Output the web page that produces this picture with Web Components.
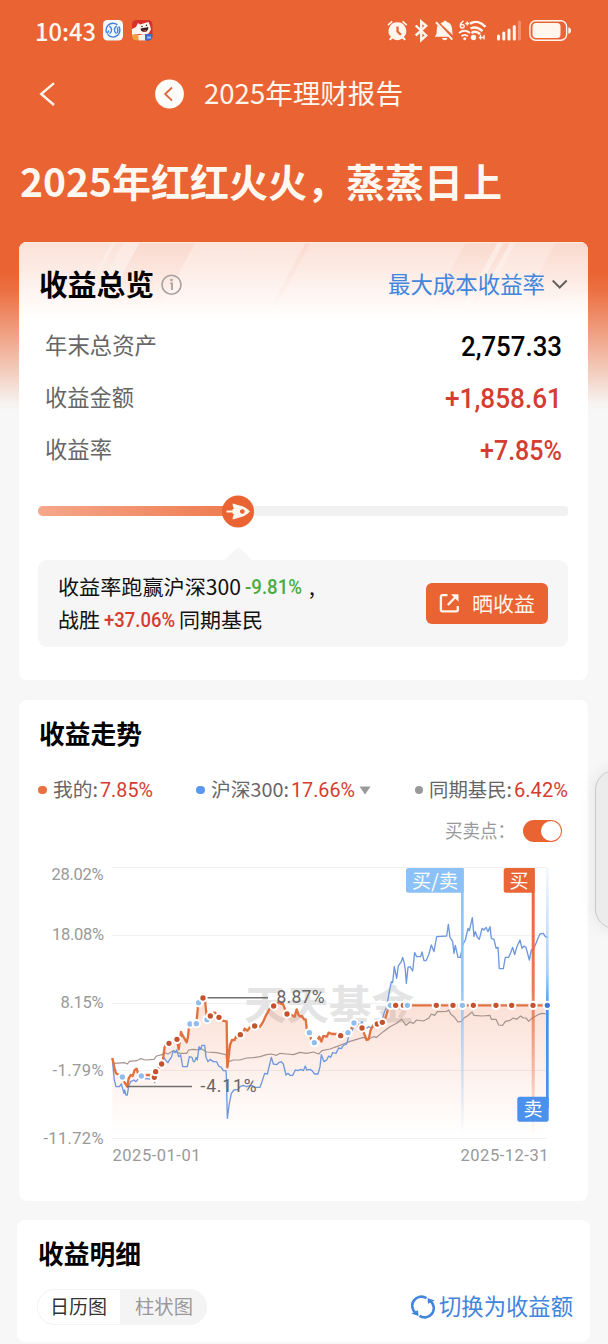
<!DOCTYPE html>
<html lang="zh-CN">
<head>
<meta charset="utf-8">
<title>2025年理财报告</title>
<style>
  html, body { margin: 0; padding: 0; }
  body { width: 608px; height: 1344px; overflow: hidden; background: #f7f7f7; font-family: "Noto Sans CJK SC", sans-serif; }
</style>
</head>
<body>
<report-page></report-page>
<script>
const make = (name, html, init) => {
  const tpl = document.createElement('template');
  tpl.innerHTML = html;
  customElements.define(name, class extends HTMLElement {
    connectedCallback() {
      if (this.shadowRoot) return;
      this.attachShadow({ mode: 'open' }).append(tpl.content.cloneNode(true));
      if (init) init(this, this.shadowRoot);
    }
  });
};

make('report-page', `
<style>
  :host { display: block; position: relative; height: 1344px; overflow: hidden;
    background: linear-gradient(#ea6333 0, #ea6333 272px, #ec7145 292px, #f0a285 335px, #f3cbbb 370px, #f7f3f2 404px, #f7f7f7 412px); }
</style>
<status-bar></status-bar>
<nav-bar></nav-bar>
<hero-title><fit-text w="482">2025年红红火火，蒸蒸日上</fit-text></hero-title>
<overview-card></overview-card>
<trend-card></trend-card>
<detail-card></detail-card>
<side-handle></side-handle>
`);

make('status-bar', `
<style>
  :host { display: flex; height: 61px; align-items: center; padding: 0 36px 0 35px; box-sizing: border-box; color: #fff6ee; }
  fit-text { font-size: 24px; font-weight: 500; line-height: 30px; }
  svg { display: block; flex: none; }
  .app { margin-left: 7px; } .app2 { margin-left: 9px; }
  .sp { flex: 1; }
</style>
<fit-text w="61">10:43</fit-text>
<svg class="app" width="20" height="21" viewBox="0 0 20 21"><rect width="20" height="20.5" rx="4.5" fill="#f6f8fd"/><g fill="none" stroke="#3d82dd" stroke-width="1.400"><circle cx="10" cy="10.200" r="6.900" stroke-dasharray="17 2 18 2 4.300 0"/><path d="M6.300 6.200c3 1.500 3 5.500.2 7.600M5.800 10.500c-.6 1.500-1 2.300-2 3M13.700 6.200c-3 1.500-3 5.500-.2 7.600M14.200 7.500c.8 1.500 1 3.500.2 5.500"/></g></svg>
<svg class="app2" width="21" height="21" viewBox="0 0 21 21"><defs><clipPath id="c"><rect width="20.500" height="20.500" rx="4.500"/></clipPath></defs><g clip-path="url(#c)"><rect width="21" height="21" fill="#d6322a"/><path d="M0 9l4-2 2-4 2 1.500 5-1.500 3.500-1 1.500 3.500 1 4-2.500 4-4.500 1.500-5-1-7 1z" fill="#fff4ef"/><path d="M8.500 8.500l8-1.500c0 3-2 5-4 5s-4-1-4-3.500z" fill="#3b2022"/><path d="M10.500 11l4-1.200-1.300 2z" fill="#e45a4c"/><circle cx="10" cy="6.500" r=".8" fill="#222"/><circle cx="14.500" cy="5.300" r=".8" fill="#222"/><path d="M0 15l6-1 2 7H0z" fill="#f0a23a"/><path d="M6 15h8v6H7z" fill="#f5f0ea"/><path d="M13 14h8v7h-8z" fill="#3f6cc8"/><path d="M15 16.500h4v2h-4z" fill="#9db6ec"/></g></svg>
<span class="sp"></span>
<svg width="186" height="26" viewBox="386 18 186 26">
  <g fill="#fff6ee">
    <path fill-rule="evenodd" d="M397.400 22.200a8.900 8.900 0 0 1 6.500 14.900l2 2.200-1.500 1.300-2.100-2a8.800 8.800 0 0 1-9.800 0l-2.100 2-1.500-1.300 2-2.200a8.900 8.900 0 0 1 6.500-14.900zm-1 4.300v5.500l3.700 3.600 1.600-1.500-3.100-3.100v-4.500z"/>
    <path d="M391.600 20.800l-4.100 3.700 1.100 1.300 4.200-3.700zM403.200 20.800l4.100 3.700-1.100 1.300-4.200-3.700z"/>
  </g>
  <path d="M415.700 25.500l10.500 10-5 4.500V21.500l5 4.300-10.500 9.700" fill="none" stroke="#fff6ee" stroke-width="2.400"/>
  <path d="M437.200 25.500c-.8 1.600-1 3.500-1 6.500 0 2-.9 3.500-2 4.700h14.300zM440 23.500c1-.8 1.900-1.200 2.900-1.400.2-1.700 3.200-1.700 3.400 0 4.600 1.200 5.500 5 5.500 9.900 0 1.500.4 2.500 1 3.400z" transform="translate(.500)" fill="#fff6ee"/>
  <path d="M442 38h5.500a2.800 2.800 0 0 1-5.500 0z" fill="#fff6ee"/>
  <path d="M436 22.300l16.300 17.300" stroke="#fff6ee" stroke-width="2"/>
  <g fill="none" stroke="#fff6ee">
    <path d="M463.500 20.800c-4 2.500-4 7.200-1.300 7.200 2.600 0 2.500-3.600 0-3.600-1 0-1.600.6-2 1.300M465.300 23.500h4M467.300 21.500v4" stroke-width="1.500"/>
    <path d="M470 23.600c5-3.300 11-1.500 15.500 3.200M470.500 28.500c4.300-2.200 8.300-.8 12 2.700M471.500 33c3-2.100 6-1.200 8.500 1" stroke-width="2.500"/>
    <path d="M459 33c3.500-2.800 7.500-2.800 11 0M461.500 36.200c2-1.700 4.300-1.700 6.300 0" stroke-width="1.900"/>
    <path d="M480.500 34.500v5M484 35v4.500M478.800 37.500h6" stroke-width="1.300"/>
  </g>
  <circle cx="464.700" cy="38.700" r="1.500" fill="#fff6ee"/><circle cx="473.500" cy="37.500" r="2.700" fill="#fff6ee"/>
  <g fill="#fff6ee"><rect x="497" y="34.500" width="3" height="6" rx="1.500"/><rect x="502.300" y="31.500" width="3" height="9" rx="1.500"/><rect x="507.500" y="28.500" width="3" height="12" rx="1.500"/><rect x="512.800" y="25" width="3" height="15.500" rx="1.500"/><rect x="518" y="20.500" width="3" height="20" rx="1.500" opacity=".3"/>
  <rect x="532.500" y="23" width="28" height="15" rx="3.500"/><path d="M568.300 27.300q2.700.6 2.700 3.300t-2.700 3.300z"/></g>
  <rect x="529.900" y="20.800" width="36.700" height="19.500" rx="5.800" fill="none" stroke="#fff6ee" stroke-width="1.400"/>
</svg>
`);

make('nav-bar', `
<style>
  :host { display: flex; height: 65px; align-items: center; padding-left: 38px; color: #fff7ee; }
  .home { margin-left: 98px; }
  fit-text { margin-left: 20px; font-size: 27.400px; line-height: 36px; font-weight: 400; position: relative; top: -2px; }
</style>
<svg width="19" height="26" viewBox="0 0 19 26"><path d="M16 2.200L3.200 13 16 24" fill="none" stroke="#fff3e8" stroke-width="2.400"/></svg>
<svg class="home" width="29" height="30" viewBox="0 0 29 30"><circle cx="14.500" cy="15" r="14.400" fill="#fffdfa"/><path d="M17 8.500L10.200 15l6.800 6.600" fill="none" stroke="#e06a40" stroke-width="1.900"/></svg>
<fit-text w="199">2025年理财报告</fit-text>
`);

make('hero-title', `
<style>
  :host { display: flex; height: 116px; align-items: center; padding-left: 20px; box-sizing: border-box; color: #fff8f0; font-size: 39px; font-weight: 700; padding-bottom: 9px; line-height: 50px; }
</style><slot></slot>
`);

make('ui-card', `
<style>
  :host { display: block; box-sizing: border-box; background: #fff; border-radius: 8px; margin: 0 20px 0 19px; overflow: hidden; }
</style><slot></slot>
`);

make('metric-row', `
<style>
  :host { display: flex; height: 52px; align-items: center; justify-content: space-between; padding: 0 26px 2px 26px; box-sizing: border-box; line-height: 36px; }
  .k { font-size: 22.300px; color: #666; padding-bottom: 1px; }
  .v { font: 500 28px/36px Roboto, sans-serif; padding-top: 5px; }
</style><span class="k"><slot name="label"></slot></span><span class="v"><slot></slot></span>
`);

make('overview-card', `
<style>
  :host { display: block; }
  ui-card { height: 438px; }
  .top { position: relative; height: 77px; background: linear-gradient(#fbe1d7, #fdeee8 45%, #fff 100%); }
  .top .bg { position: absolute; inset: 0; }
  .head { position: relative; display: flex; align-items: center; height: 77px; padding: 5px 20px 0 20px; box-sizing: border-box; }
  h2 { margin: -1px 0 0; font-size: 29px; line-height: 40px; font-weight: 700; color: #000; }
  .head svg { margin-left: 7px; margin-top: 4px; flex: none; }
  .mode { margin-left: auto; font-size: 22.400px; line-height: 36px; color: #4285dc; }
  .head svg.chev { margin-left: 6px; margin-top: 2px; }
  .red { color: #d43d30; }
  .slider { height: 72px; display: flex; align-items: center; padding: 0 20px 0 19px; }
  .track { flex: 1; height: 9.500px; border-radius: 4px 3px 3px 4px; background: #f1f1f1; position: relative; }
  .fill { width: 200px; height: 100%; border-radius: 5px 0 0 5px; background: linear-gradient(90deg, #f5a78a, #ee7a4e); }
  .knob { position: absolute; left: 184px; top: -11.500px; }
  .arrow { display: block; margin-left: 206px; }
  .tip { margin: 0 20px 0 19px; height: 87px; background: #f6f6f6; border-radius: 9px; display: flex; align-items: center; justify-content: space-between; padding: 0 20px 0 20px; box-sizing: border-box; }
  .lines { padding-bottom: 2px; }
  .line { display: flex; height: 32.500px; align-items: center; font-size: 20.800px; line-height: 32px; color: #111; }
  .num { font-family: Roboto, sans-serif; font-weight: 500; font-size: 20.500px; padding-top: 2px; }
  .g { color: #4bac3e; margin: 0 7px 0 4px; } .r { color: #d43d30; margin: 0 4px 0 4px; }
  .btn { display: flex; align-items: center; width: 122px; height: 41px; background: #ea6333; border-radius: 6px; color: #fff5ea; font-size: 20.800px; line-height: 32px; box-sizing: border-box; padding-left: 13px; }
  .btn fit-text { margin-left: 12px; margin-top: -2px; }
</style>
<ui-card>
  <div class="top">
    <svg class="bg" width="569" height="77" viewBox="19 242 569 77"><defs>
      <linearGradient id="d" x1="0" y1="0" x2="0" y2="1"><stop offset="0" stop-color="#f5bba8" stop-opacity=".2"/><stop offset="1" stop-color="#f5bba8" stop-opacity="0"/></linearGradient>
      <linearGradient id="l" x1="0" y1="0" x2="0" y2="1"><stop offset="0" stop-color="#fff" stop-opacity=".28"/><stop offset="1" stop-color="#fff" stop-opacity="0"/></linearGradient></defs>
      <path d="M112 242h4l-38 70h-4zM124 242h16l-38 70H86z" fill="url(#l)"/>
      <path d="M140 242h56l-38 70h-56z" fill="url(#d)"/>
      <path d="M196 242h110l-38 70H158z" fill="url(#l)" opacity=".4"/>
      <path d="M306 242h5l-38 70h-5zM466 242h32l-38 70h-32zM504 242h6l-38 70h-6zM556 242h32v50l-70 20z" fill="url(#d)"/>
      <path d="M498 242h6l-38 70h-6zM511 242h5l-38 70h-5z" fill="url(#l)"/>
      <path d="M19 242.600h569" stroke="#fbe9da" stroke-width="1.200"/>
    </svg>
    <div class="head">
      <h2><fit-text w="115">收益总览</fit-text></h2>
      <svg width="22" height="22" viewBox="0 0 22 22"><circle cx="10.500" cy="10.700" r="9.500" fill="none" stroke="#aaa09c" stroke-width="1.600"/><path d="M9.300 9.300h1.700v6.700" fill="none" stroke="#aaa09c" stroke-width="1.800"/><circle cx="10.500" cy="6" r="1.300" fill="#aaa09c"/></svg>
      <fit-text class="mode" w="157">最大成本收益率</fit-text>
      <svg class="chev" width="17" height="12" viewBox="0 0 17 12"><path d="M1.700 2.500l7 7 7-7" fill="none" stroke="#666260" stroke-width="2"/></svg>
    </div>
  </div>
  <metric-row><fit-text w="112" slot="label">年末总资产</fit-text><fit-text w="101" style="color:#000">2,757.33</fit-text></metric-row>
  <metric-row><fit-text w="89" slot="label">收益金额</fit-text><fit-text w="117" class="red">+1,858.61</fit-text></metric-row>
  <metric-row><fit-text w="67" slot="label">收益率</fit-text><fit-text w="82" class="red">+7.85%</fit-text></metric-row>
  <div class="slider"><div class="track"><div class="fill"></div>
    <svg class="knob" width="32" height="33" viewBox="0 0 32 33"><circle cx="16" cy="16.500" r="16" fill="#ea6333"/><path fill-rule="evenodd" d="M28 16.500c-3.300 3.500-6.800 5.400-10.500 5.900-2.300.4-4.200 1.300-6.700 2-.6-1.700.4-3.400 1.200-5-1-.2-1.600-.7-1.600-1.900H4.500v-2h5.900c0-1.200.6-1.700 1.600-1.900-.8-1.600-1.800-3.300-1.200-5 2.500.7 4.400 1.600 6.700 2 3.700.5 7.200 2.400 10.500 5.900zm-7.700-2.300a2.300 2.300 0 1 0 .01 0z" fill="#fff6ee"/></svg>
  </div></div>
  <svg class="arrow" width="27" height="13" viewBox="0 0 27 13"><path d="M0 13L11.800 1.200q1.700-1.200 3.400 0L27 13z" fill="#f6f6f6"/></svg>
  <div class="tip">
    <div class="lines">
      <div class="line"><fit-text w="183">收益率跑赢沪深300</fit-text><fit-text w="57" class="num g">-9.81%</fit-text><span>,</span></div>
      <div class="line"><fit-text w="42">战胜</fit-text><fit-text w="71" class="num r">+37.06%</fit-text><fit-text w="84">同期基民</fit-text></div>
    </div>
    <div class="btn"><svg width="21" height="21" viewBox="0 0 21 21"><path d="M8.500 2.200H3.500a1.600 1.600 0 0 0-1.600 1.600v13a1.600 1.600 0 0 0 1.600 1.600h13.700a1.600 1.600 0 0 0 1.600-1.600V13" fill="none" stroke="#fff5ea" stroke-width="2.300"/><path d="M8.800 12L17 3.500" stroke="#fff5ea" stroke-width="2.300"/><path d="M12 1.300h7.500v7.500z" fill="#fff5ea"/></svg><fit-text w="63">晒收益</fit-text></div>
  </div>
</ui-card>
`);

make('legend-item', `
<style>
  :host { display: flex; align-items: center; font-size: 19.200px; line-height: 30px; color: #666; }
  i { width: 8.500px; height: 8.500px; border-radius: 50%; background: var(--dot); margin-right: 6px; flex: none; position: relative; top: 1px; }
  ::slotted([slot=value]) { font-family: Roboto, sans-serif; color: #d43d30; font-size: 19.500px; margin: 4px 0 0 2px; }
</style><i></i><slot></slot><slot name="value"></slot><slot name="more"></slot>
`);

make('toggle-switch', `
<style>
  :host { display: flex; width: 39px; height: 22.500px; border-radius: 12px; background: #ea6333; justify-content: flex-end; align-items: center; padding-right: 1px; box-sizing: border-box; }
  i { width: 20.500px; height: 20.500px; border-radius: 50%; background: #fff; }
</style><i></i>
`);

make('trend-card', `
<style>
  :host { display: block; margin-top: 20px; }
  ui-card { height: 500.500px; }
  h2 { margin: 0; height: 68px; padding: 0 0 4px 20px; box-sizing: border-box; display: flex; align-items: center; font-size: 26px; font-weight: 700; color: #000; }
  .legend { height: 44px; display: flex; align-items: center; padding: 0 20px 2px 19px; box-sizing: border-box; justify-content: space-between; }
  .pts { height: 38px; display: flex; align-items: center; justify-content: flex-end; padding-right: 26px; color: #999; font-size: 19.200px; line-height: 30px; }
  .pts fit-text { margin: -3px 8px 0 0; }
  .more { margin: 2px 0 0 4px; }
</style>
<ui-card>
  <h2><fit-text w="103">收益走势</fit-text></h2>
  <div class="legend">
    <legend-item style="--dot:#e87040"><fit-text w="45">我的:</fit-text><fit-text slot="value" w="53">7.85%</fit-text></legend-item>
    <legend-item style="--dot:#5b97ee"><fit-text w="78">沪深300:</fit-text><fit-text slot="value" w="64">17.66%</fit-text><svg class="more" slot="more" width="12" height="9" viewBox="0 0 12 9"><path d="M.5.500h11L6 8.500z" fill="#999"/></svg></legend-item>
    <legend-item style="--dot:#999"><fit-text w="83">同期基民:</fit-text><fit-text slot="value" w="54">6.42%</fit-text></legend-item>
  </div>
  <div class="pts"><fit-text w="70">买卖点：</fit-text><toggle-switch></toggle-switch></div>
  <trend-chart></trend-chart>
</ui-card>
`);

make('trend-chart', `
<style>
  :host { display: block; }
  svg { display: block; }
  text { font-family: Roboto, sans-serif; }
  .t { font-size: 16.500px; fill: #999; }
  .c { font-family: "Noto Sans CJK SC", sans-serif; font-size: 19px; fill: #fff; }
  .n { font-size: 17.500px; fill: #666; }
</style>
<svg width="569" height="325" viewBox="19 850 569 325">
  <defs>
    <linearGradient id="area" gradientUnits="userSpaceOnUse" x1="0" y1="420" x2="0" y2="825"><stop offset="0" stop-color="#ea6333" stop-opacity=".2"/><stop offset="1" stop-color="#ea6333" stop-opacity="0"/></linearGradient>
    <linearGradient id="m1" gradientUnits="userSpaceOnUse" x1="0" y1="868" x2="0" y2="1136"><stop offset="0" stop-color="#8cc1f8"/><stop offset=".45" stop-color="#8cc1f8" stop-opacity=".9"/><stop offset="1" stop-color="#8cc1f8" stop-opacity="0"/></linearGradient>
    <linearGradient id="m2" gradientUnits="userSpaceOnUse" x1="0" y1="868" x2="0" y2="1136"><stop offset="0" stop-color="#ea6333"/><stop offset=".45" stop-color="#ea6333" stop-opacity=".85"/><stop offset="1" stop-color="#ea6333" stop-opacity="0"/></linearGradient>
    <linearGradient id="m3" gradientUnits="userSpaceOnUse" x1="0" y1="868" x2="0" y2="1097"><stop offset="0" stop-color="#8cc1f8" stop-opacity=".1"/><stop offset=".45" stop-color="#8cc1f8" stop-opacity=".75"/><stop offset=".62" stop-color="#4a90ec"/><stop offset="1" stop-color="#4a90ec"/></linearGradient>
  </defs>
  <path d="M112 867.500h435M112 935.500h435M112 1003.500h435M112 1070.500h435M112 1138.500h435" stroke="#f1f1f1"/>
  <text x="244" y="1018.500" textLength="170" lengthAdjust="spacingAndGlyphs" style="font:700 40px 'Noto Sans CJK SC',sans-serif" fill="#e4e4e4">天天基金</text>
  <g id="plot" transform="translate(0 860) scale(.33333)" fill="none" stroke-linejoin="round"></g>
  <g class="t">
    <text class="t" x="51.500" y="879.500" textLength="52">28.02%</text>
    <text class="t" x="52" y="940" textLength="52">18.08%</text>
    <text class="t" x="60.500" y="1008" textLength="43">8.15%</text>
    <text class="t" x="52.500" y="1075.500" textLength="51">-1.79%</text>
    <text class="t" x="43.500" y="1143.500" textLength="60">-11.72%</text>
    <text class="t" x="112.500" y="1160.500" textLength="88">2025-01-01</text>
    <text class="t" x="460.500" y="1160.500" textLength="88">2025-12-31</text>
  </g>
  <path d="M203 997.800h65M127 1086.600h65" stroke="#707070" stroke-width="1.500"/>
  <rect x="461" y="868" width="2.700" height="268" fill="url(#m1)"/>
  <rect x="531.700" y="868" width="3" height="268" fill="url(#m2)"/>
  <rect x="546" y="868" width="2.700" height="240" fill="url(#m3)"/>
  <g id="dots" transform="translate(0 860) scale(.33333)" stroke="#fff" stroke-width="6"></g>
  <path d="M408.500 868h52.700q2.500 0 2.500 2.500v22.200h-55.200q-2.500 0-2.500-2.500v-19.700q0-2.500 2.500-2.500z" fill="#8cc1f8"/>
  <path d="M506.200 868h26q2.500 0 2.500 2.500v22.200h-28.500q-2.500 0-2.500-2.500v-19.700q0-2.500 2.500-2.500z" fill="#ea6636"/>
  <path d="M519.800 1096.700h28.900v22.500q0 2.500-2.500 2.500h-26.400q-2.500 0-2.500-2.500v-20q0-2.500 2.500-2.500z" fill="#4a90ec"/>
  <text class="c" x="412" y="887.500" textLength="46">买/卖</text>
  <text class="c" x="509.500" y="887.500">买</text>
  <text class="c" x="523.500" y="1116">卖</text>
  <text class="n" x="276.500" y="1003" textLength="48">8.87%</text>
  <text class="n" x="200.500" y="1092" textLength="56">-4.11%</text>
</svg>
`, (el, root) => {
  /* Points are kept in thirds of a pixel; each window of the year has its own x origin. */
  const join = parts => parts.map(([dx, s]) => s.split(' ').map(p => { const [x, y] = p.split(','); return (+x + dx) + ',' + y; }).join(' ')).join(' ');
  const mine = join([
    [90, '247,594 253,622 258,640 268,645 278,655 284,668 292,680 296,655 302,645 308,648 314,630 320,626 324,640 334,648 345,645 358,645 366,650 373,652 377,635 386,622 395,612 400,590 404,560 410,552 417,550 428,548 434,540 441,538 446,568 450,540 453,516 460,530 470,547 474,530 478,492 499,490 502,460 505,425 519,414 525,420 528,450 531,475 541,468 550,458 556,458 560,472 567,472 578,482 588,484'],
    [630, '50,484 52,622 56,590 60,555 66,540 74,540 78,530 84,533 91,524 98,518 104,506 112,512 120,502 134,497 150,500 158,488 168,466 178,448 184,440 191,437 200,432 208,425 214,432 218,430 224,445 231,462 240,462 254,470 260,448 266,465 272,470 276,468 282,478 287,478 290,505 298,518 304,540 313,548 320,545 328,530 334,545 340,528 350,530 356,518 366,522 380,522 392,526 400,518 414,518 424,505 432,490 440,488 456,504 462,520 470,540 476,538 482,510 490,495 500,492 508,490 517,487 524,480 530,462 536,440 541,436'],
    [1170, '60,436 472,436']]);
  const index = join([
    [90, '247,594 250,630 253,660 258,680 268,680 274,672 282,700 284,690 288,705 292,705 296,678 302,665 312,660 318,665 326,655 334,648 345,656 372,658 374,668 378,640 388,622 396,610 402,592 408,602 414,608 418,600 424,592 430,572 436,578 440,570 446,590 452,585 458,620 472,620 478,590 486,592 490,605 494,605 498,592 502,600 507,560 512,568 516,556 524,556 528,592 534,605 540,598 550,605 560,605 566,618 574,622 580,632 588,632'],
    [630, '49,650 52,775 58,730 64,700 72,690 84,688 90,680 100,676 110,680 125,676 135,682 150,682 156,665 164,640 172,642 184,592 190,612 200,614 206,608 214,605 220,612 228,645 234,640 240,646 248,646 256,630 264,632 272,628 280,632 286,618 290,630 300,628 306,632 314,642 324,642 330,620 334,584 342,605 350,600 356,588 362,592 368,578 378,580 386,564 394,566 400,556 410,552 416,530 424,515 432,500 440,498 446,500 456,485 462,500 470,505 476,500 484,504 494,498 502,500 510,480 518,475 522,460 530,440 538,395 544,365 548,368 553,320 558,345 560,355 565,318 570,310 574,305 578,292 583,310 586,330 589,370 594,322'],
    [1170, '60,320 68,333 74,278 80,290 92,290 96,276 102,302 108,302 116,285 124,255 132,275 140,230 170,228 175,193 180,232 188,245 192,280 196,256 204,292 211,292 218,255 226,240 234,205 238,212 247,173 252,230 256,215 262,232 268,238 276,205 282,210 288,202 294,215 300,200 304,235 312,238 318,264 324,262 328,326 340,326 346,292 356,292 362,278 368,262 374,284 380,262 390,240 396,265 402,258 408,262 414,285 418,300 424,270 430,268 436,255 444,235 450,222 460,220 466,230 473,232']]);
  const peers = join([
    [90, '247,600 253,610 284,608 292,612 298,604 320,602 332,596 346,600 372,598 380,588 396,584 404,578 414,582 430,572 440,576 450,580 470,580 476,570 490,568 506,570 514,566 530,576 560,578 588,584'],
    [630, '52,622 56,605 70,600 90,600 110,594 130,593 150,590 170,584 184,582 200,586 210,580 230,582 250,584 270,577 290,580 310,576 326,582 336,572 360,567 380,560 400,552 420,544 440,538 460,532 474,538 490,530 500,532 520,515 540,500 560,490 575,478 588,496'],
    [1170, '60,486 70,490 80,480 100,483 116,475 124,462 134,466 142,455 170,454 176,450 182,462 192,470 204,486 214,484 222,474 232,468 246,456 252,466 276,468 300,466 304,478 318,478 326,495 338,496 346,484 358,482 370,474 380,478 392,468 400,474 408,474 416,484 424,476 434,470 444,464 456,460 472,462']]);
  root.getElementById('plot').innerHTML =
    `<polygon points="${mine} 1642,835 337,835" fill="url(#area)"/>` +
    `<polyline points="${peers}" stroke="#a3948d" stroke-width="3.600"/>` +
    `<polyline points="${index}" stroke="#6d98de" stroke-width="4"/>` +
    `<polyline points="${mine}" stroke="#e2713f" stroke-width="7"/>`;
  const dot = (pts, fill) => pts.split(' ').map(p => { const [x, y] = p.split(','); return `<circle cx="${x}" cy="${y}" r="11" fill="${fill}"/>`; }).join('');
  root.getElementById('dots').innerHTML =
    dot(join([[630, '502,492 580,436']]), '#c4522e') +
    dot(join([[90, '277,651 334,648 480,492 499,491 506,428 531,479'], [630, '298,518 313,548 414,518 432,489 541,436 592,436'], [1170, '217,436']]), '#90bdec') +
    dot(join([[90, '519,414 417,550 441,538 395,612 373,652 377,635 541,468 567,472'], [630, '91,524 134,498 191,438 231,462 392,527 456,504 517,487 557,436'], [1170, '139,436 189,436 250,436 318,436 365,436 429,436']]), '#c4522e') +
    dot(join([[1170, '472,436']]), '#3f78cf');
});

make('detail-card', `
<style>
  :host { display: block; margin-top: 19.500px; }
  ui-card { height: 122px; margin: 0 18px 0 17px; }
  h2 { margin: 0; height: 69px; padding: 0 0 4px 21px; box-sizing: border-box; display: flex; align-items: center; font-size: 26px; font-weight: 700; color: #000; }
  .row { display: flex; align-items: center; justify-content: space-between; padding: 0 17px 0 20px; height: 36px; }
  .tabs { display: flex; width: 170px; height: 36px; border-radius: 18px; overflow: hidden; background: #f4f4f4; font-size: 19px; line-height: 30px; color: #999; box-shadow: inset 0 0 0 1px #f4f4f4; }
  .tabs > div { width: 86px; display: flex; align-items: center; justify-content: center; padding-bottom: 3px; box-sizing: border-box; }
  .tabs .on { width: 84px; background: #fff; color: #333; border: 1px solid #f4f4f4; border-radius: 18px 0 0 18px; padding: 0 2px 3px 0; }
  .sw { display: flex; align-items: center; gap: 4px; font-size: 22.400px; line-height: 34px; color: #4285dc; }
  .sw fit-text { margin-top: -4px; }
</style>
<ui-card>
  <h2><fit-text w="103">收益明细</fit-text></h2>
  <div class="row">
    <div class="tabs"><div class="on"><fit-text w="57">日历图</fit-text></div><div><fit-text w="58">柱状图</fit-text></div></div>
    <div class="sw"><svg width="24" height="24" viewBox="0 0 24 24"><g fill="none" stroke="#4285dc" stroke-width="2.600"><path d="M4.600 18A9.200 9.200 0 0 1 15.500 3.200"/><path d="M19.400 6A9.200 9.200 0 0 1 8.500 20.800"/></g><path d="M.3 18.500l6.700-3.200.5 5.700zM23.700 5.500l-6.700 3.200-.5-5.700z" fill="#4285dc"/></svg><fit-text w="134">切换为收益额</fit-text></div>
  </div>
</ui-card>
`);

make('side-handle', `
<style>
  :host { position: absolute; left: 595px; top: 770px; width: 40px; height: 159px; box-sizing: border-box; border: 1px solid #c9c9c9; border-radius: 22px; background: #ececec; box-shadow: 0 0 16px rgba(0,0,0,.09); }
</style>
`);

/* A one-line label condensed or widened to a set measure. */
make('fit-text', `
<style>
  :host { display: inline-block; flex: none; white-space: nowrap; }
  span { display: inline-block; transform-origin: 0 50%; }
</style><span><slot></slot></span>
`, (el, root) => {
  const w = +el.getAttribute('w'), s = root.querySelector('span');
  const natural = s.getBoundingClientRect().width;
  el.style.width = w + 'px';
  if (natural) s.style.transform = `scaleX(${w / natural})`;
});
</script>
</body>
</html>
